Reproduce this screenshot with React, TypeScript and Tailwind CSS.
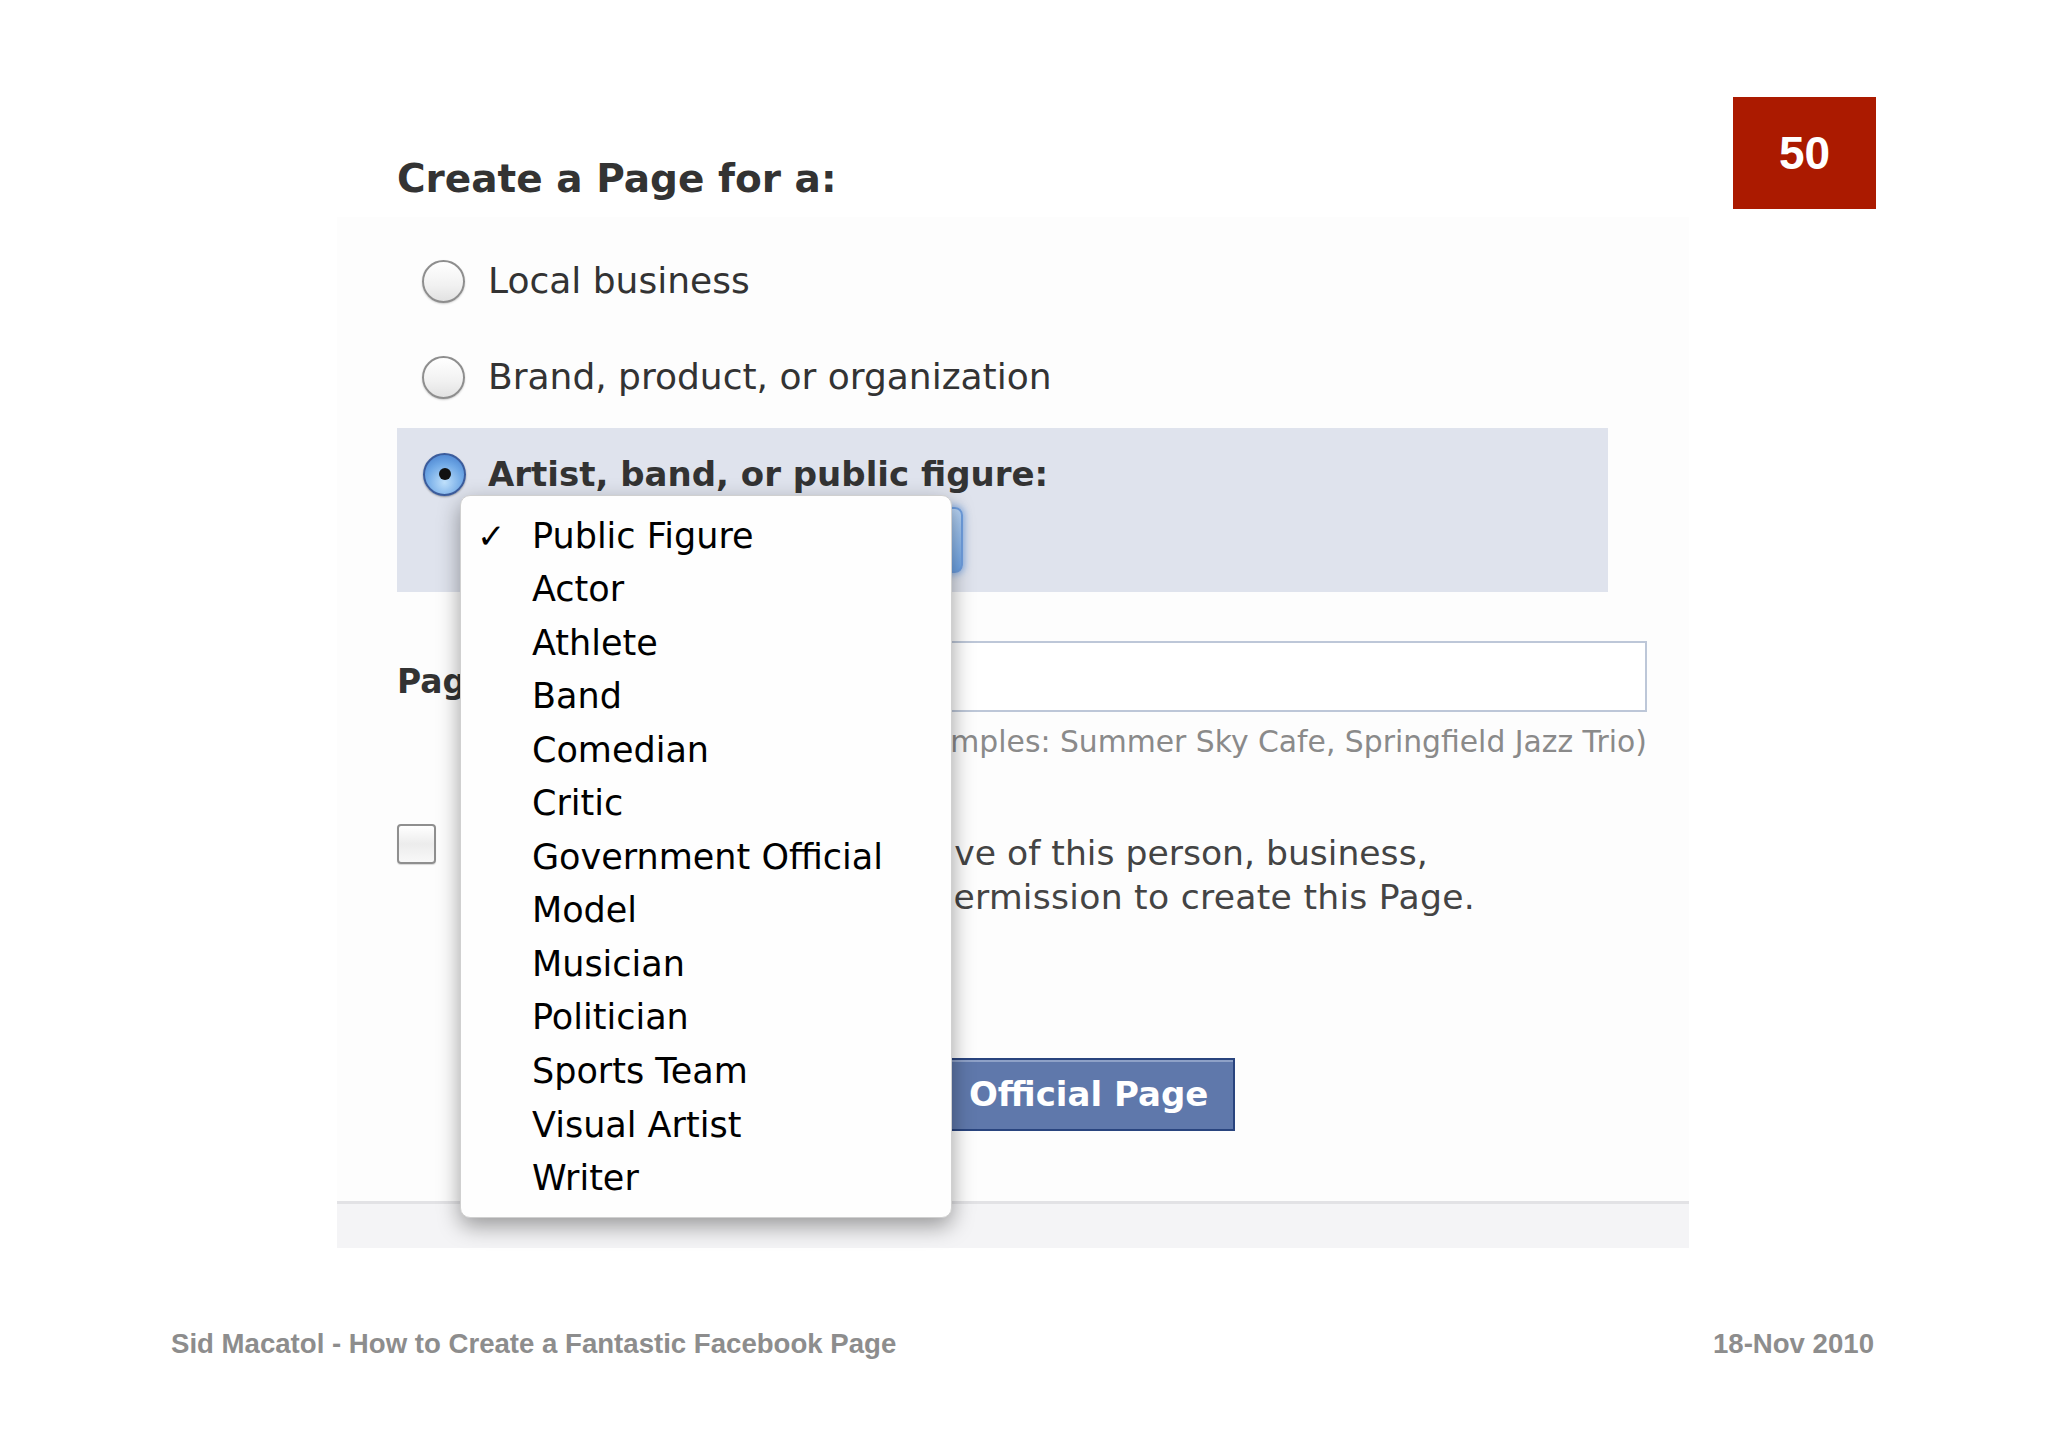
import React from "react";

const items = [
  "Public Figure",
  "Actor",
  "Athlete",
  "Band",
  "Comedian",
  "Critic",
  "Government Official",
  "Model",
  "Musician",
  "Politician",
  "Sports Team",
  "Visual Artist",
  "Writer",
];

function Radio({ checked }: { checked?: boolean }) {
  if (checked) {
    return (
      <div className="w-[43px] h-[43px] rounded-full border-2 border-[#3b5c9c] bg-[radial-gradient(circle_at_50%_70%,#bfe0fb_0%,#6fa8e6_55%,#3f77c8_100%)] shadow-[0_1px_2px_rgba(0,0,0,0.35)] flex items-center justify-center shrink-0">
        <div className="w-[12px] h-[12px] rounded-full bg-[#111]" />
      </div>
    );
  }
  return (
    <div className="w-[43px] h-[43px] rounded-full border-2 border-[#8e8e8e] bg-[linear-gradient(180deg,#ffffff_0%,#f1f1f1_60%,#e2e2e2_100%)] shadow-[0_1px_2px_rgba(0,0,0,0.2)] shrink-0" />
  );
}

export default function App() {
  return (
    <div className="relative w-[2048px] h-[1447px] bg-white overflow-hidden font-['DejaVu_Sans',sans-serif]">
      {/* Slide number badge */}
      <div className="absolute left-[1733px] top-[97px] w-[143px] h-[112px] bg-[#ab1a00] flex items-center justify-center text-white font-bold text-[46px] font-['Liberation_Sans',Arial,sans-serif]">
        50
      </div>

      {/* Title */}
      <div className="pt-[156px] pl-[397px]">
        <div className="h-[46px] leading-[46px] text-[39px] font-bold text-[#333333]">
          Create a Page for a:
        </div>
      </div>

      {/* Screenshot panel */}
      <div className="ml-[337px] mt-[15px] w-[1352px] bg-[#fdfdfd]">
        <div className="pl-[60px] pt-[42px]">
          <div className="flex items-center h-[44px] pl-[25px] gap-[23px]">
            <Radio />
            <span className="text-[36px] text-[#333333] leading-[44px]">Local business</span>
          </div>
          <div className="flex items-center h-[44px] pl-[25px] gap-[23px] mt-[52px]">
            <Radio />
            <span className="text-[36px] text-[#333333] leading-[44px]">Brand, product, or organization</span>
          </div>

          {/* Selected option box */}
          <div className="mt-[29px] w-[1211px] h-[164px] bg-[#dfe3ed] pt-[24px]">
            <div className="flex items-center h-[44px] pl-[26px] gap-[22px]">
              <Radio checked />
              <span className="text-[34px] font-bold text-[#333333] leading-[44px]">Artist, band, or public figure:</span>
            </div>
            <div className="ml-[91px] mt-[11px] w-[475px] h-[66px] rounded-[8px] border-2 border-[#6f9fe0] bg-[linear-gradient(180deg,#b9d5f5,#6ea4e6)] shadow-[0_0_6px_2px_rgba(90,150,230,0.55)]" />
          </div>

          {/* Page name */}
          <div className="mt-[49px] flex">
            <div className="w-[488px] pt-[21px] text-[33px] font-bold text-[#333333] leading-[40px]">Page name:</div>
            <div>
              <div className="w-[762px] h-[71px] border-2 border-[#bdc7d8] bg-white" />
              <div className="mt-[12px] text-[29.8px] leading-[36px] text-[#8a8a8a]">
                (examples: Summer Sky Cafe, Springfield Jazz Trio)
              </div>
            </div>
          </div>

          {/* Checkbox */}
          <div className="mt-[64px] flex items-start">
            <div className="w-[39px] h-[40px] rounded-[4px] border-2 border-[#8f8f8f] bg-[linear-gradient(180deg,#ffffff_0%,#ececec_50%,#f8f8f8_100%)] shadow-[0_1px_1px_rgba(0,0,0,0.15)] shrink-0" />
            <div className="ml-[28px] mt-[7px] text-[34.6px] leading-[44px] text-[#444444]">
              I am the official representative of this person, business,
              <br />
              <span className="tracking-[0.28px]">band or product and have permission to create this Page.</span>
            </div>
          </div>

          {/* Button */}
          <div className="mt-[139px] ml-[413px] flex">
            <div className="h-[73px] border-2 border-[#29447e] bg-[#5f78ab] shadow-[inset_0_2px_0_#8ea1c7] pl-[8px] pr-[25px] flex items-center text-white font-bold text-[34px] whitespace-pre">
              <span>Create</span>
              <span className="ml-[10px]"> Official Page</span>
            </div>
          </div>
        </div>

        {/* Bottom bar */}
        <div className="mt-[70px] h-[47px] border-t-[3px] border-[#e2e2e5] bg-[#f4f4f6]" />
      </div>

      {/* Footer */}
      <div className="mt-[79px] pl-[171px] pr-[174px] flex justify-between items-center h-[34px] font-['Liberation_Sans',Arial,sans-serif] font-bold text-[27.6px] text-[#8d8d8d]">
        <span>Sid Macatol - How to Create a Fantastic Facebook Page</span>
        <span>18-Nov 2010</span>
      </div>

      {/* Dropdown menu overlay */}
      <div className="absolute left-[460px] top-[495px] w-[492px] h-[723px] rounded-[10px] bg-[#fefefe] shadow-[0_8px_22px_rgba(0,0,0,0.38)] border border-[#d0d0d0] pt-[13px]">
        {items.map((it, i) => (
          <div key={it} className="flex items-center h-[53.55px] text-[35px] text-black">
            <span className="w-[71px] pl-[16px] text-[34px] leading-none">{i === 0 ? "✓" : ""}</span>
            <span>{it}</span>
          </div>
        ))}
      </div>
    </div>
  );
}
